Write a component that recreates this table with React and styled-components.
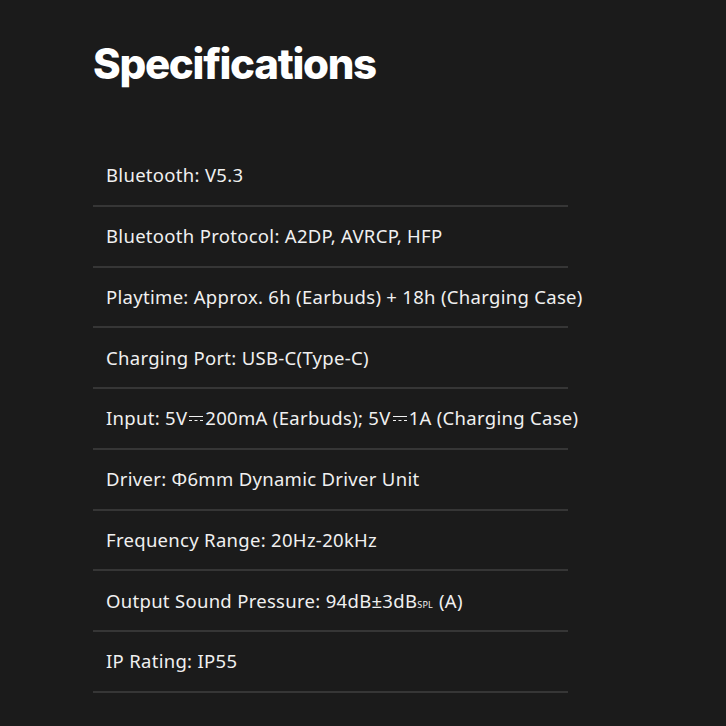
import React from "react";
import styled, { createGlobalStyle } from "styled-components";

const GlobalStyle = createGlobalStyle`
  html, body {
    margin: 0;
    padding: 0;
    background: #1b1b1b;
  }
  body {
    font-family: "Inter", "Noto Sans", sans-serif;
    color: #f2f2f2;
  }
`;

const Page = styled.div`
  width: 726px;
  height: 726px;
  box-sizing: border-box;
  padding: 36px 0 0 93px;
  background: #1b1b1b;
  overflow: hidden;
`;

const Title = styled.h1`
  margin: 0 0 54px;
  font-family: "Inter", sans-serif;
  font-weight: 800;
  font-size: 42px;
  line-height: 56px;
  letter-spacing: -1.3px;
  color: #ffffff;
`;

const List = styled.ul`
  list-style: none;
  margin: 0;
  padding: 0;
  width: 475px;
`;

const Row = styled.li`
  box-sizing: border-box;
  height: 60.75px;
  display: flex;
  align-items: center;
  padding: 0 0 1px 13px;
  border-bottom: 2px solid #363636;
  font-family: "Noto Sans", sans-serif;
  font-size: 18.5px;
  letter-spacing: 0.3px;
  color: #f0f0f0;
  white-space: nowrap;
`;

const Text = styled.span`
  display: inline-flex;
  align-items: baseline;
`;

const Sub = styled.span`
  font-size: 9px;
  letter-spacing: 0.2px;
  text-transform: uppercase;
  margin-right: 6px;
`;

const Dc = styled.span`
  display: inline-block;
  align-self: center;
  width: 14px;
  height: 3px;
  margin: 2px 2px 0;
  border-top: 1.5px solid #f0f0f0;
  border-bottom: 1.5px dashed #f0f0f0;
`;

const specs = [
  "Bluetooth: V5.3",
  "Bluetooth Protocol: A2DP, AVRCP, HFP",
  "Playtime: Approx. 6h (Earbuds) + 18h (Charging Case)",
  "Charging Port: USB-C(Type-C)",
  <>
    Input: 5V<Dc title="⎓" />200mA (Earbuds); 5V<Dc title="⎓" />1A (Charging Case)
  </>,
  "Driver: Φ6mm Dynamic Driver Unit",
  "Frequency Range: 20Hz-20kHz",
  <>
    Output Sound Pressure: 94dB±3dB<Sub>spl</Sub>(A)
  </>,
  "IP Rating: IP55",
];

export default function App() {
  return (
    <Page>
      <GlobalStyle />
      <Title>Specifications</Title>
      <List>
        {specs.map((s, i) => (
          <Row key={i}>
            <Text>{s}</Text>
          </Row>
        ))}
      </List>
    </Page>
  );
}
